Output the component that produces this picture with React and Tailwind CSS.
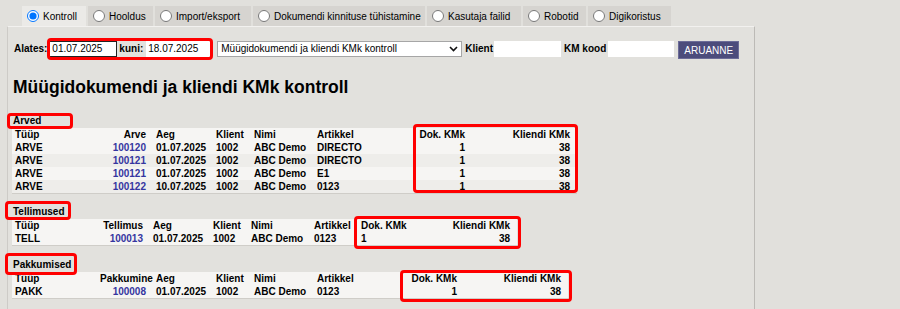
const tabs = [
  { label: 'Kontroll', w: 'w-[64px]', active: true },
  { label: 'Hooldus', w: 'w-[65px]' },
  { label: 'Import/eksport', w: 'w-[96px]' },
  { label: 'Dokumendi kinnituse tühistamine', w: 'w-[172px]' },
  { label: 'Kasutaja failid', w: 'w-[94px]' },
  { label: 'Robotid', w: 'w-[63px]' },
  { label: 'Digikoristus', w: 'w-[83px]' },
];

const L = 'text-left pl-[3px]';
const R = 'text-right pr-[7px]';
const R3 = 'text-right pr-[3px]';

const sections = [
  {
    title: 'Arved',
    width: 'w-[565px]',
    cols: [
      ['w-[88px]', L], ['w-[53px]', R], ['w-[60px]', L], ['w-[38px]', L],
      ['w-[63px]', L], ['w-[100px]', L], ['w-[54px]', R3], ['w-[109px]', R],
    ],
    head: ['Tüüp', 'Arve', 'Aeg', 'Klient', 'Nimi', 'Artikkel', 'Dok. KMk', 'Kliendi KMk'],
    rows: [
      ['ARVE', '100120', '01.07.2025', '1002', 'ABC Demo', 'DIRECTO', '1', '38'],
      ['ARVE', '100121', '01.07.2025', '1002', 'ABC Demo', 'DIRECTO', '1', '38'],
      ['ARVE', '100121', '01.07.2025', '1002', 'ABC Demo', 'E1', '1', '38'],
      ['ARVE', '100122', '10.07.2025', '1002', 'ABC Demo', '0123', '1', '38'],
    ],
    mt: 'mt-[17px]',
  },
  {
    title: 'Tellimused',
    width: 'w-[505px]',
    cols: [
      ['w-[88px]', L], ['w-[50px]', R], ['w-[60px]', L], ['w-[38px]', L],
      ['w-[63px]', L], ['w-[47px]', L], ['w-[60px]', L], ['w-[99px]', R],
    ],
    head: ['Tüüp', 'Tellimus', 'Aeg', 'Klient', 'Nimi', 'Artikkel', 'Dok. KMk', 'Kliendi KMk'],
    rows: [['TELL', '100013', '01.07.2025', '1002', 'ABC Demo', '0123', '1', '38']],
    mt: 'mt-[11px]',
  },
  {
    title: 'Pakkumised',
    width: 'w-[556px]',
    cols: [
      ['w-[88px]', L], ['w-[53px]', R], ['w-[60px]', L], ['w-[38px]', L],
      ['w-[63px]', L], ['w-[86px]', L], ['w-[60px]', R3], ['w-[108px]', R],
    ],
    head: ['Tüüp', 'Pakkumine', 'Aeg', 'Klient', 'Nimi', 'Artikkel', 'Dok. KMk', 'Kliendi KMk'],
    rows: [['PAKK', '100008', '01.07.2025', '1002', 'ABC Demo', '0123', '1', '38']],
    mt: 'mt-[12px]',
  },
];

const Section = ({ s }) => (
  <div className={s.mt}>
    <div className="h-[14px] leading-[14px] pl-[1px] font-bold">{s.title}</div>
    <table className={`table-fixed border-collapse ${s.width} border-b border-[#cfcdc8]`}>
      <colgroup>
        {s.cols.map(([w], i) => (
          <col key={i} className={w} />
        ))}
      </colgroup>
      <tbody>
        <tr className="bg-[#f6f5f3]">
          {s.head.map((h, i) => (
            <td key={i} className={`h-[13px] leading-[13px] p-0 font-bold whitespace-nowrap ${s.cols[i][1]}`}>
              {h}
            </td>
          ))}
        </tr>
        {s.rows.map((r, ri) => (
          <tr key={ri} className={ri % 2 === 0 ? 'bg-[#f6f5f3]' : 'bg-[#eeedea]'}>
            {r.map((c, i) => (
              <td key={i} className={`h-[13px] leading-[13px] p-0 font-bold whitespace-nowrap ${s.cols[i][1]}`}>
                {i === 1 ? <span className="text-[#3535a0]">{c}</span> : c}
              </td>
            ))}
          </tr>
        ))}
      </tbody>
    </table>
  </div>
);

// red annotation boxes drawn over the screenshot
const marks = [
  'left-[47px] top-[38px] w-[166px] h-[22px]',
  'left-[7px] top-[113px] w-[66px] h-[16px]',
  'left-[413px] top-[124px] w-[165px] h-[69px]',
  'left-[5px] top-[201px] w-[66px] h-[19px]',
  'left-[354px] top-[216px] w-[167px] h-[33px]',
  'left-[5px] top-[253px] w-[72px] h-[22px]',
  'left-[400px] top-[270px] w-[172px] h-[32px]',
];

export default function App() {
  return (
    <div className="relative h-[309px] overflow-hidden bg-[#e1e0dc] text-[10px] text-black font-['Liberation_Sans',Arial,sans-serif]">
      {/* tabs */}
      <div className="flex gap-[2px] pt-[6px] pl-[22px]">
        {tabs.map((t) => (
          <div
            key={t.label}
            className={`${t.w} h-[20px] flex items-center pl-[5px] gap-[4px] whitespace-nowrap ${t.active ? 'bg-[#ebeae7]' : 'bg-[#d6d4d0]'}`}
          >
            <input type="radio" readOnly checked={!!t.active} className="w-[12px] h-[12px] m-0" />
            <span className="text-[10px]">{t.label}</span>
          </div>
        ))}
      </div>

      {/* panel */}
      <div className="ml-[7px] w-[748px] h-[290px] border-t border-t-[#f2f1ef] border-l border-l-[#cdcbc7] border-r border-r-[#bcbab6] bg-[#e2e1dd] pl-[4px] pt-[14px]">
        <div className="flex items-start h-[18px]">
          <span className="ml-[2px] h-[16px] leading-[16px] font-bold">Alates:</span>
          <div className="ml-[2px] w-[68px] h-[16px] leading-[14px] bg-white border border-[#222] pl-[2px]">01.07.2025</div>
          <span className="ml-[2px] h-[16px] leading-[16px] font-bold">kuni:</span>
          <div className="ml-[3px] w-[64px] h-[16px] leading-[16px] bg-white pl-[2px]">18.07.2025</div>
          <div className="ml-[7px] w-[245px] h-[16px] bg-white border border-[#a6a6a6] flex items-center justify-between pl-[3px] pr-[3px]">
            <span className="leading-[14px]">Müügidokumendi ja kliendi KMk kontroll</span>
            <svg width="9" height="6" viewBox="0 0 9 6">
              <path d="M1 1l3.5 3.5L8 1" fill="none" stroke="#111" strokeWidth="1.6" />
            </svg>
          </div>
          <span className="ml-[3px] h-[16px] leading-[16px] font-bold">Klient</span>
          <div className="ml-[1px] w-[67px] h-[16px] bg-white" />
          <span className="ml-[3px] h-[16px] leading-[16px] font-bold">KM kood</span>
          <div className="ml-[2px] w-[66px] h-[16px] bg-white" />
          <div className="ml-[4px] w-[61px] h-[18px] bg-[#4c4c7c] border border-[#6c6c98] text-white flex items-center justify-center">
            ARUANNE
          </div>
        </div>

        <h1 className="mt-[18px] h-[20px] leading-[20px] pl-[1px] text-[17.5px] font-bold">
          Müügidokumendi ja kliendi KMk kontroll
        </h1>

        {sections.map((s) => (
          <Section key={s.title} s={s} />
        ))}
      </div>

      {marks.map((m) => (
        <div key={m} className={`absolute ${m} border-[3px] border-[#ff0000] rounded-[4px] pointer-events-none`} />
      ))}
    </div>
  );
}
